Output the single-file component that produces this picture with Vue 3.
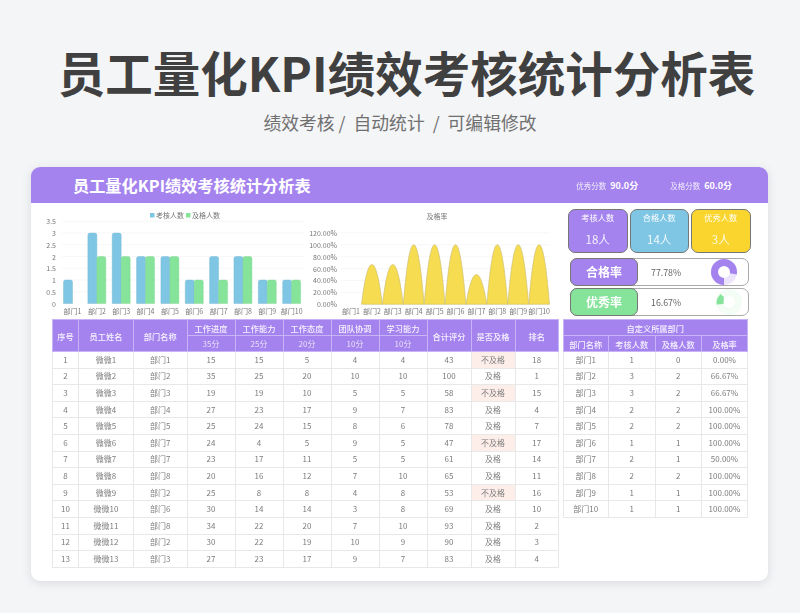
<script setup>
const cats = ['部门1','部门2','部门3','部门4','部门5','部门6','部门7','部门8','部门9','部门10']
const total = [1,3,3,2,2,1,2,2,1,1]
const pass = [0,2,2,2,2,1,1,2,1,1]
const rates = [0,66.67,66.67,100,100,100,50,100,100,100]
const y1 = v => 303.5 - v * 23.5
const barX = i => 72.5 + 24.35 * i
const barPath = (x, v) => {
  const t = y1(v)
  return `M${x} 303.5V${t + 2}Q${x} ${t} ${x + 2} ${t}H${x + 7}Q${x + 9} ${t} ${x + 9} ${t + 2}V303.5Z`
}
const y2 = v => 304.3 - v * 0.596
const areaX = i => 351 + 20.9 * i
const dome = (c, v) => {
  const t = y2(v)
  const h = 304.3 - t
  return `M${c - 10.4} 304.3C${c - 7.4} ${t + h * 0.38} ${c - 4} ${t} ${c} ${t}C${c + 4} ${t} ${c + 7.4} ${t + h * 0.38} ${c + 10.4} 304.3Z`
}
const rows = [
  [1,'微微1','部门1',15,15,5,4,4,43,'不及格',18],
  [2,'微微2','部门2',35,25,20,10,10,100,'及格',1],
  [3,'微微3','部门3',19,19,10,5,5,58,'不及格',15],
  [4,'微微4','部门4',27,23,17,9,7,83,'及格',4],
  [5,'微微5','部门5',25,24,15,8,6,78,'及格',7],
  [6,'微微6','部门7',24,4,5,9,5,47,'不及格',17],
  [7,'微微7','部门7',23,17,11,5,5,61,'及格',14],
  [8,'微微8','部门8',20,16,12,7,10,65,'及格',11],
  [9,'微微9','部门2',25,8,8,4,8,53,'不及格',16],
  [10,'微微10','部门6',30,14,14,3,8,69,'及格',10],
  [11,'微微11','部门8',34,22,20,7,10,93,'及格',2],
  [12,'微微12','部门2',30,22,19,10,9,90,'及格',3],
  [13,'微微13','部门3',27,23,17,9,7,83,'及格',4],
]
const sideRows = cats.map((c, i) => [c, total[i], pass[i], rates[i].toFixed(2) + '%'])
const mainCols = [26,55,53.5,48,48,48,48,48,44,44,43.5]
const sideCols = [45.500,46.5,46.5,46]
const stats = [
  { label: '考核人数', value: '18人', cls: 'purple' },
  { label: '合格人数', value: '14人', cls: 'blue' },
  { label: '优秀人数', value: '3人', cls: 'yellow' },
]
const donutPath = (p, r = 9.5) => {
  const c = 2 * Math.PI * r
  return `${c * p} ${c}`
}
</script>

<template>
  <div class="page">
    <header class="hero">
      <h1>员工量化KPI绩效考核统计分析表</h1>
      <p>绩效考核 /&nbsp; 自动统计 &nbsp;/&nbsp; 可编辑修改</p>
    </header>
    <section class="card">
      <div class="bar">
        <div class="bar-title">员工量化KPI绩效考核统计分析表</div>
        <div class="score"><span>优秀分数</span><b>90.0分</b></div>
        <div class="score"><span>及格分数</span><b>60.0分</b></div>
      </div>
      <div class="top">
        <svg class="charts" viewBox="31 204 528 116" width="528" height="116">
          <g class="grid">
            <line v-for="v in [0.5,1,1.5,2,2.5,3,3.5]" :key="v" x1="62" x2="304" :y1="y1(v)" :y2="y1(v)" />
            <line v-for="v in [20,40,60,80,100,120]" :key="'r'+v" x1="341" x2="550" :y1="y2(v)" :y2="y2(v)" />
          </g>
          <g class="axis">
            <text v-for="v in [0,0.5,1,1.5,2,2.5,3,3.5]" :key="v" x="56" :y="y1(v) + 3" text-anchor="end">{{ v }}</text>
            <text v-for="(c,i) in cats" :key="c" :x="barX(i)" y="313.5" text-anchor="middle">{{ c }}</text>
            <text v-for="v in [0,20,40,60,80,100,120]" :key="'p'+v" x="337" :y="y2(v) + 3" text-anchor="end">{{ v }}.00%</text>
            <text v-for="(c,i) in cats" :key="'a'+c" :x="areaX(i)" y="313.5" text-anchor="middle">{{ c }}</text>
          </g>
          <rect x="150" y="213" width="4.5" height="4.5" fill="#7ec6e4" />
          <text class="axis" x="156" y="218">考核人数</text>
          <rect x="186" y="213" width="4.5" height="4.5" fill="#86e39a" />
          <text class="axis" x="192" y="218">及格人数</text>
          <text class="axis" x="437" y="219" text-anchor="middle">及格率</text>
          <g v-for="(c,i) in cats" :key="'b'+c">
            <path :d="barPath(barX(i) - 9, total[i])" fill="#7ec6e4" stroke="#74b5d2" stroke-width=".4" />
            <path v-if="pass[i]" :d="barPath(barX(i), pass[i])" fill="#86e39a" stroke="#7ed391" stroke-width=".4" />
            <path v-if="rates[i]" :d="dome(areaX(i), rates[i])" fill="#f6dc50" stroke="#c8bb72" stroke-width=".6" />
          </g>
        </svg>
        <div class="kpis">
          <div class="stats">
            <div v-for="s in stats" :key="s.label" class="stat" :class="s.cls">
              <span>{{ s.label }}</span>
              <strong>{{ s.value }}</strong>
            </div>
          </div>
          <div class="rate">
            <div class="rate-label purple">合格率</div>
            <div class="rate-value">77.78%</div>
            <svg class="donut" viewBox="0 0 28 28" width="28" height="28">
              <circle cx="14" cy="14" r="9.5" class="ring" stroke="#ece4fd" />
              <circle cx="14" cy="14" r="9.5" class="ring" stroke="#a583ef" :stroke-dasharray="donutPath(0.7778)" transform="rotate(90 14 14)" />
            </svg>
          </div>
          <div class="rate">
            <div class="rate-label green">优秀率</div>
            <div class="rate-value">16.67%</div>
            <svg class="donut shifted" viewBox="0 0 28 28" width="28" height="28">
              <circle cx="14" cy="14" r="9.5" class="ring" stroke="#f3fcf5" />
              <path d="M5.5 6L8.8 9L8.500 16L1.5 16.500Q1.200 13 2.500 10Z" fill="#86e39a" />
            </svg>
          </div>
        </div>
      </div>
      <div class="tables">
        <table class="main">
          <colgroup><col v-for="(w,i) in mainCols" :key="i" :style="{ width: w + 'px' }" /></colgroup>
          <thead>
            <tr>
              <th rowspan="2">序号</th><th rowspan="2">员工姓名</th><th rowspan="2">部门名称</th>
              <th>工作进度</th><th>工作能力</th><th>工作态度</th><th>团队协调</th><th>学习能力</th>
              <th rowspan="2">合计评分</th><th rowspan="2">是否及格</th><th rowspan="2">排名</th>
            </tr>
            <tr class="sub"><th>35分</th><th>25分</th><th>20分</th><th>10分</th><th>10分</th></tr>
          </thead>
          <tbody>
            <tr v-for="r in rows" :key="r[0]">
              <td v-for="(c,i) in r" :key="i" :class="{ fail: c === '不及格' }">{{ c }}</td>
            </tr>
          </tbody>
        </table>
        <table class="side">
          <colgroup><col v-for="(w,i) in sideCols" :key="i" :style="{ width: w + 'px' }" /></colgroup>
          <thead>
            <tr><th colspan="4">自定义所属部门</th></tr>
            <tr><th>部门名称</th><th>考核人数</th><th>及格人数</th><th>及格率</th></tr>
          </thead>
          <tbody>
            <tr v-for="r in sideRows" :key="r[0]"><td v-for="(c,i) in r" :key="i">{{ c }}</td></tr>
          </tbody>
        </table>
      </div>
    </section>
  </div>
</template>

<style>
html, body { margin: 0; background: #f4f5f7; }
</style>

<style scoped>
.page {
  width: 800px;
  height: 613px;
  overflow: hidden;
  background: #f4f5f7;
  font-family: "Noto Sans CJK SC", "Noto Sans", sans-serif;
  box-sizing: border-box;
  padding-top: 40px;
}
.hero { text-align: center; }
h1 {
  margin: 0;
  padding-left: 13px;
  font-size: 47.5px;
  line-height: 64px;
  font-weight: 700;
  color: #404040;
  white-space: nowrap;
}
.hero p {
  margin: 6px 0 0;
  font-size: 17.8px;
  line-height: 25px;
  color: #707070;
}
.card {
  width: 737px;
  height: 414px;
  margin: 32px 0 0 31px;
  background: #fff;
  border-radius: 9px;
  overflow: hidden;
  box-shadow: 0 2px 10px rgba(90, 90, 100, .16);
  filter: blur(.3px);
}
.bar {
  height: 36px;
  background: #a583ef;
  display: flex;
  align-items: center;
  padding: 0 36px 0 42px;
  color: #fff;
}
.bar-title { font-size: 16.2px; font-weight: 700; flex: 1; }
.score { display: flex; align-items: center; gap: 4px; margin-left: 32px; }
.score span { font-size: 7.5px; opacity: .85; }
.score b { font-size: 9px; font-weight: 700; }
.top { display: flex; height: 116px; }
.charts { display: block; margin-top: 1px; flex: none; }
.grid line { stroke: #f3f3f3; stroke-width: .7; }
.axis, .axis text { font-size: 7px; fill: #777; }
.kpis { width: 200px; flex: none; padding: 6px 0 0 9px; box-sizing: border-box; }
.stats { display: flex; gap: 2px; margin-bottom: 5px; }
.stat {
  width: 59.500px;
  height: 44px;
  box-sizing: border-box;
  border: 1px solid #777;
  border-radius: 7px;
  color: #fff;
  display: flex;
  flex-direction: column;
  align-items: center;
}
.stat span { font-size: 8.2px; line-height: 14px; }
.stat strong { font-size: 11.5px; font-weight: 400; line-height: 16px; margin-top: 7px; opacity: .88; }
.purple { background: #a583ef; }
.blue { background: #7ec6e4; }
.yellow { background: #fad52e; }
.green { background: #86e39a; }
.rate {
  width: 179px;
  height: 28px;
  margin: 0 0 2px 2px;
  box-sizing: border-box;
  border: 1px solid #aaa;
  border-radius: 7px;
  display: flex;
  align-items: center;
}
.rate-label {
  width: 68px;
  height: 28px;
  margin: -1px 0 -1px -1px;
  box-sizing: border-box;
  border: 1px solid #777;
  border-radius: 7px;
  flex: none;
  color: #fff;
  font-size: 12px;
  font-weight: 700;
  line-height: 26px;
  text-align: center;
}
.rate-value { font-size: 8.8px; color: #666; margin-left: 13px; flex: 1; }
.donut { margin-right: 10px; flex: none; }
.donut.shifted { margin-right: 5.500px; }
.ring { fill: none; stroke-width: 7; }
.tables { display: flex; align-items: flex-start; padding-left: 21px; gap: 3.500px; }
table { border-collapse: collapse; table-layout: fixed; flex: none; }
.main { width: 505px; }
.side { width: 184.5px; }
th, td {
  padding: 0;
  text-align: center;
  white-space: nowrap;
  overflow: hidden;
  line-height: 12px;
}
th {
  height: 15px;
  font-size: 8.2px;
  background: #a583ef;
  color: #f6f2ff;
  font-weight: 500;
  border: 1px solid #c7b3f6;
}
.sub th { font-weight: 400; font-size: 8px; color: #e8e0fb; }
td {
  height: 15.6px;
  font-size: 8px;
  color: #7c7c7c;
  border: 1px solid #e8e8e8;
}
td.fail { background: #fdeeea; }
</style>
